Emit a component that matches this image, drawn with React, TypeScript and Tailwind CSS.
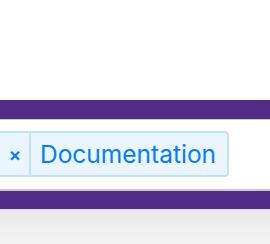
export default function App() {
  return (
    <div className="w-[270px] h-[244px] overflow-hidden bg-white font-['Inter','Liberation_Sans',Arial,sans-serif]">
      <div className="h-[100px] bg-white" />
      <div className="h-[19px] bg-[#532c88]" />
      <div className="h-[72px] border-t border-b-2 border-[#c9c9c9] bg-white pt-[11px]">
        <div className="-ml-[5px] inline-flex h-[46px] items-stretch rounded-[4px] border-2 border-[#c2e0ff] bg-[#ebf5ff] text-[#007eff]">
          <span className="flex w-[34px] items-center justify-center border-r-2 border-[#c2e0ff] pl-[4px] text-[19px] font-semibold leading-none">
            ×
          </span>
          <span className="flex items-center pl-[9px] pr-[11px] text-[24.5px] leading-none">
            Documentation
          </span>
        </div>
      </div>
      <div className="h-[18px] bg-[#532c88]" />
      <div className="h-[35px] border-t border-[#dedede] bg-gradient-to-b from-[#e9e9e9] to-[#f4f4f4]" />
    </div>
  )
}
